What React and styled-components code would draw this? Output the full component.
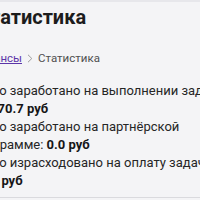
import React from "react";
import styled, { createGlobalStyle } from "styled-components";

const Global = createGlobalStyle`
  html, body { margin: 0; padding: 0; }
  body {
    background: #f4f4f6;
    font-family: Roboto, "Noto Sans", sans-serif;
    color: #222;
    overflow: hidden;
    width: 200px;
    height: 200px;
  }
`;

const Frame = styled.div`
  width: 200px;
  height: 198px;
  box-sizing: border-box;
  border-top: 2px solid #e7e7eb;
  border-bottom: 1px solid #dadade;
  overflow: hidden;
`;

const Content = styled.main`
  margin-left: -28px;
  width: 270px;
  padding-top: 3px;
  display: flex;
  flex-direction: column;
`;

const Title = styled.h1`
  margin: 0;
  padding-left: 5px;
  font-size: 20px;
  line-height: 24px;
  font-weight: 700;
  color: #1c1c1c;
  white-space: nowrap;
`;

const Crumbs = styled.nav`
  margin-top: 21px;
  display: flex;
  align-items: center;
  gap: 5px;
  font-size: 11.5px;
  line-height: 16px;
  color: #505050;
  white-space: nowrap;
`;

const CrumbLink = styled.a`
  color: #5b35a8;
  text-decoration: underline;
`;

const Chevron = styled.svg`
  width: 6px;
  height: 9px;
  flex: none;
`;

const Stats = styled.div`
  margin-top: 16px;
  font-size: 13px;
  line-height: 18px;
  color: #262626;
`;

const Line = styled.p`
  margin: 0;
`;

const Value = styled.b`
  font-weight: 700;
  color: #161616;
  white-space: nowrap;
`;

export default function App() {
  return (
    <>
      <Global />
      <Frame>
        <Content>
          <Title>Статистика</Title>
          <Crumbs>
            <CrumbLink href="#">Финансы</CrumbLink>
            <Chevron viewBox="0 0 6 9">
              <polyline points="1,0.8 4.8,4.5 1,8.2" fill="none" stroke="#9b9b9b" strokeWidth="1" />
            </Chevron>
            <span>Статистика</span>
          </Crumbs>
          <Stats>
            <Line>
              Всего заработано на выполнении заданий: <Value>12 470.7 руб</Value>
            </Line>
            <Line>
              Всего заработано на партнёрской программе: <Value>0.0 руб</Value>
            </Line>
            <Line>
              Всего израсходовано на оплату задач: <Value>10.0 руб</Value>
            </Line>
          </Stats>
        </Content>
      </Frame>
    </>
  );
}
